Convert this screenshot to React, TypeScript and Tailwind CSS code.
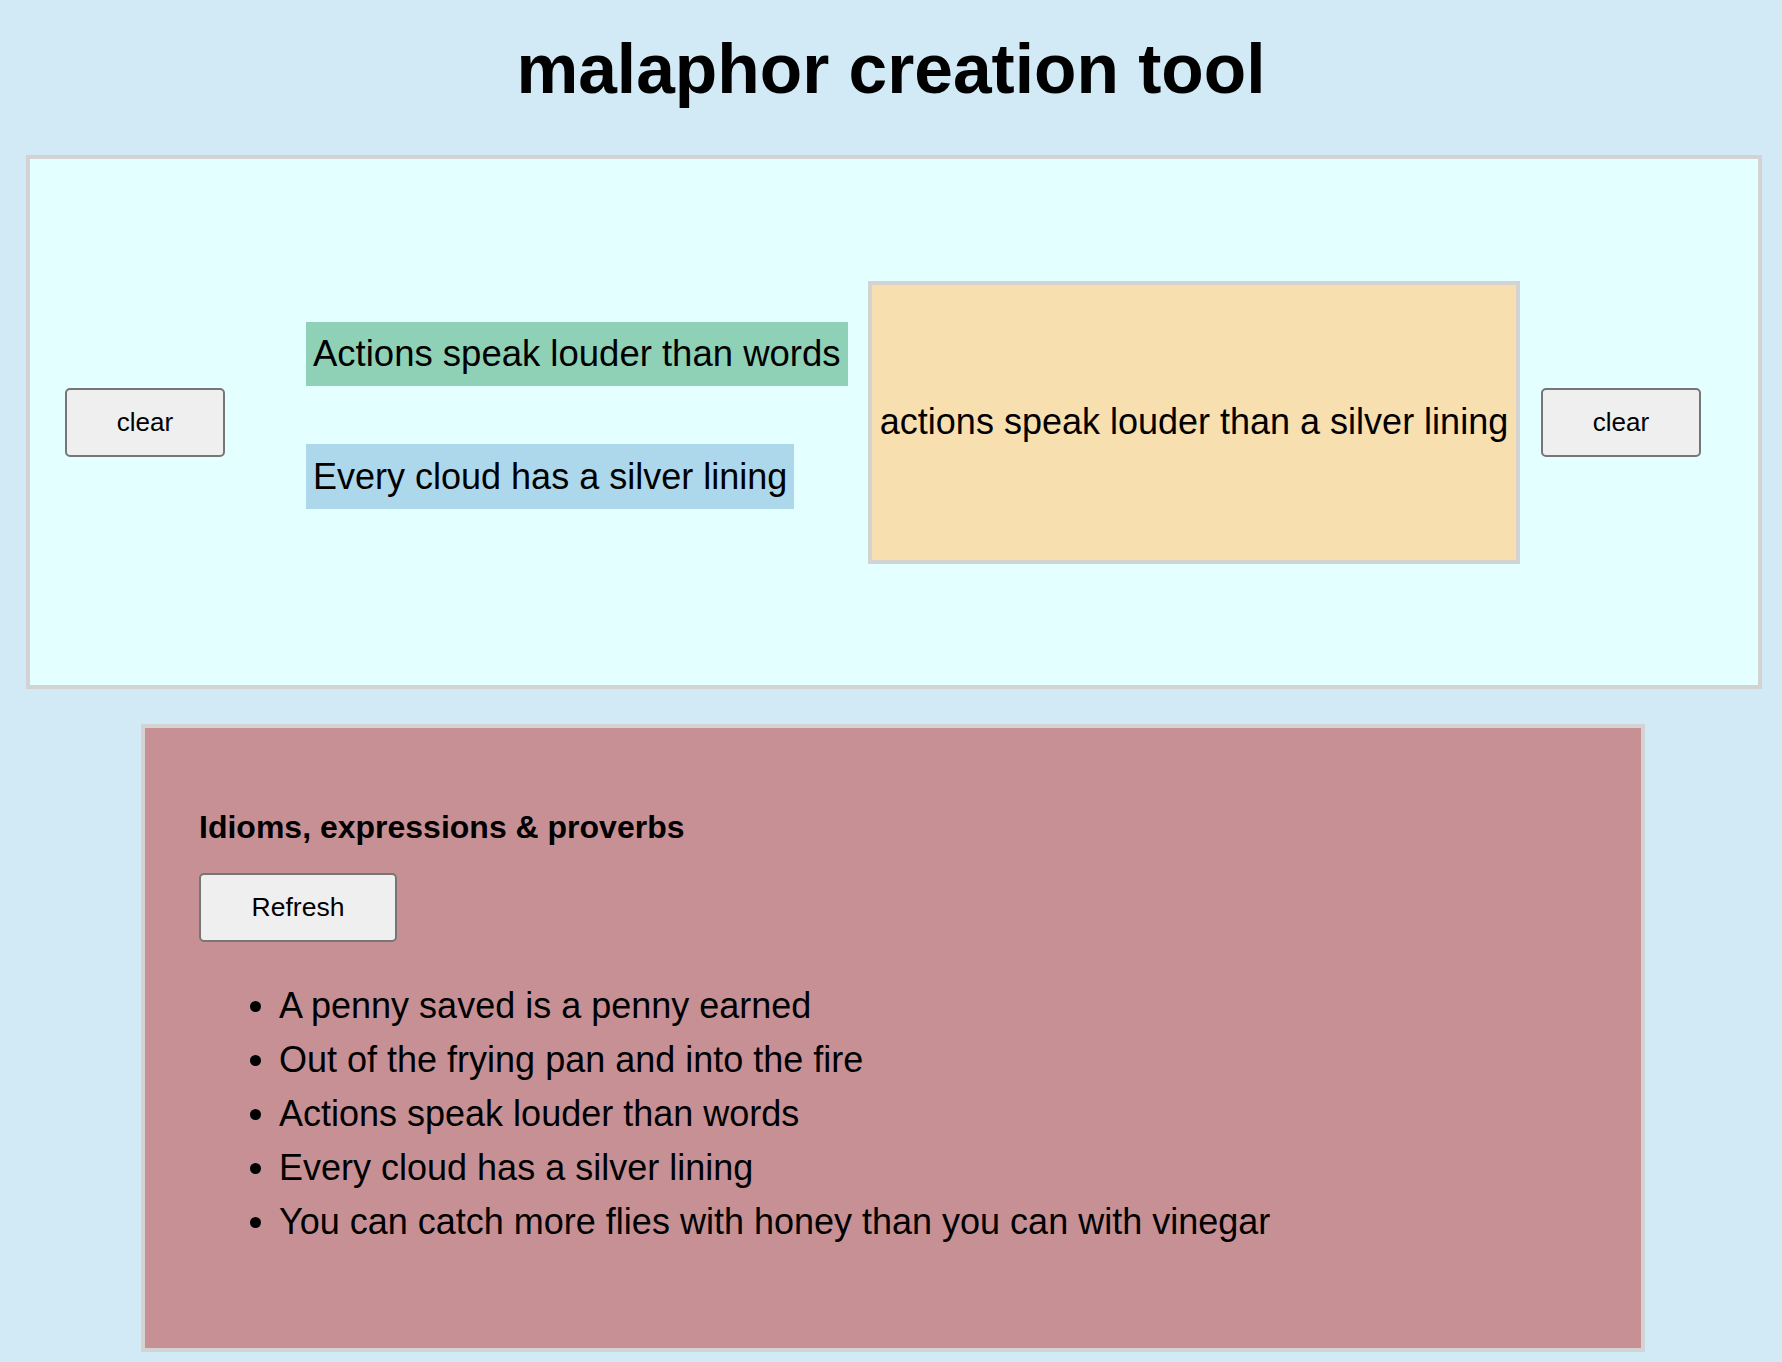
import { FC } from 'react';

const idioms = [
  'A penny saved is a penny earned',
  'Out of the frying pan and into the fire',
  'Actions speak louder than words',
  'Every cloud has a silver lining',
  'You can catch more flies with honey than you can with vinegar',
];

const ClearButton: FC<{ className?: string }> = ({ className = '' }) => (
  <button
    className={`w-[160px] h-[69px] shrink-0 bg-[#efefef] border-2 border-[#767676] rounded-[5px] text-[26px] text-black ${className}`}
  >
    clear
  </button>
);

const App: FC = () => {
  return (
    <div className="min-h-screen bg-[#d2eaf6] font-['Liberation_Sans',Arial,sans-serif] text-black pt-[29px]">
      <h1 className="text-center text-[69.5px] font-bold leading-[normal]">
        malaphor creation tool
      </h1>

      <div className="ml-[26px] mr-[20px] mt-[46px] h-[534px] border-4 border-[#d3d3d3] bg-[#e4ffff] flex items-center">
        <ClearButton className="ml-[35px]" />
        <div className="ml-[81px] mb-[13px] w-[562px] shrink-0 flex flex-col items-start gap-[58px]">
          <div className="h-[64px] px-[7px] flex items-center bg-[#8fd1b6] text-[36.5px]">
            Actions speak louder than words
          </div>
          <div className="h-[65px] px-[7px] flex items-center bg-[#add8ec] text-[36px]">
            Every cloud has a silver lining
          </div>
        </div>
        <div className="w-[652px] h-[283px] shrink-0 border-4 border-[#d3d3d3] bg-[#f8dfb0] flex items-center justify-center text-[36px]">
          actions speak louder than a silver lining
        </div>
        <ClearButton className="ml-[21px]" />
      </div>

      <div className="ml-[141px] mt-[35px] w-[1504px] h-[628px] border-4 border-[#d3d3d3] bg-[#c79095] pl-[54px] pt-[81px]">
        <h3 className="text-[32px] font-bold leading-[normal]">
          Idioms, expressions &amp; proverbs
        </h3>
        <button className="mt-[27px] w-[198px] h-[69px] bg-[#efefef] border-2 border-[#767676] rounded-[5px] text-[26.5px]">
          Refresh
        </button>
        <ul className="mt-[37px] pl-[80px] list-disc text-[36px] leading-[54px]">
          {idioms.map((idiom) => (
            <li key={idiom}>{idiom}</li>
          ))}
        </ul>
      </div>
    </div>
  );
};

export default App;
